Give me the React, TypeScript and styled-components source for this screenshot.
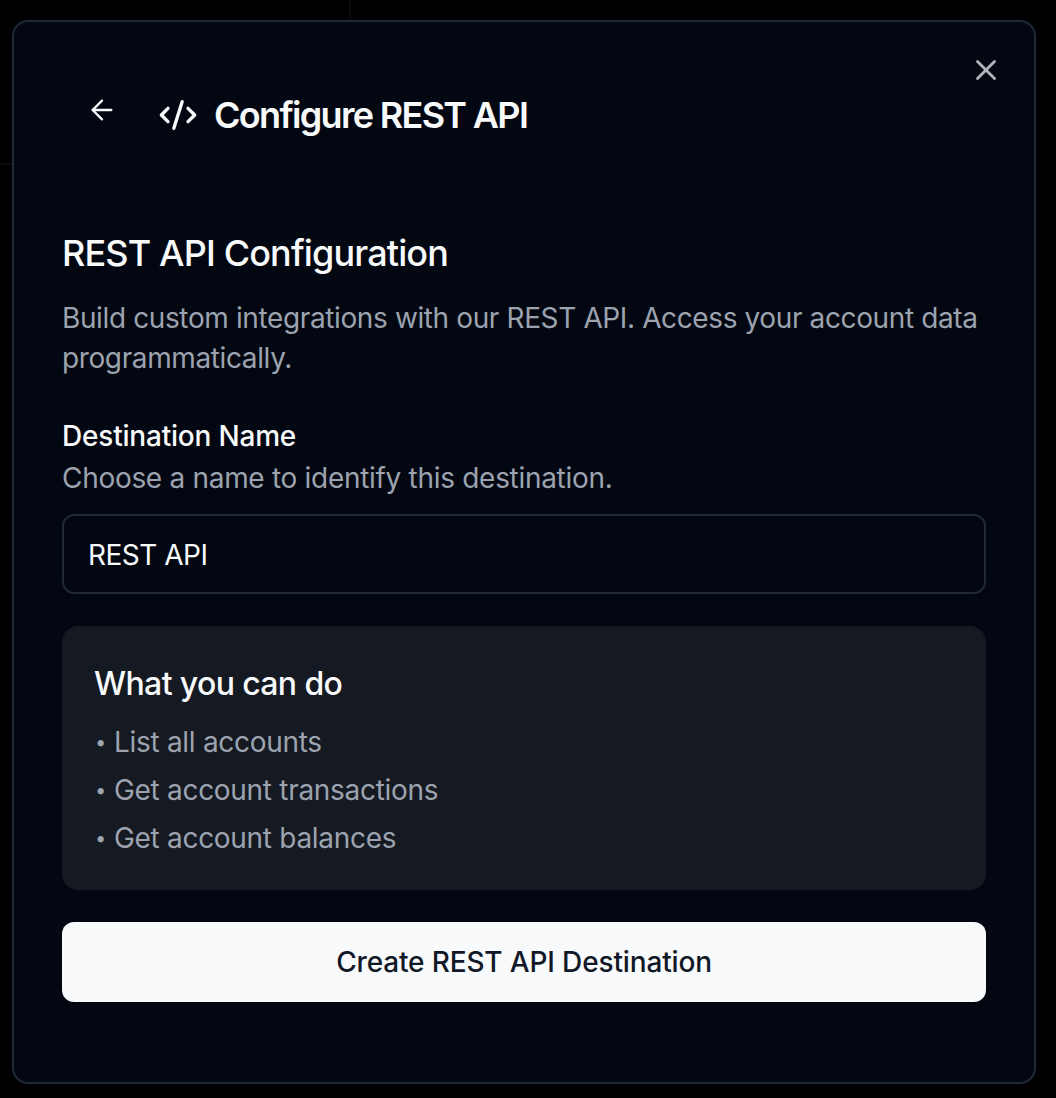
import React from 'react';
import styled, { createGlobalStyle } from 'styled-components';
import { ArrowLeft, CodeXml, X } from 'lucide-react';

const GlobalStyle = createGlobalStyle`
  html, body {
    margin: 0;
    padding: 0;
    background: #000;
  }
  * {
    box-sizing: border-box;
  }
`;

const ACTIONS = ['List all accounts', 'Get account transactions', 'Get account balances'];

export default function App() {
  return (
    <>
      <GlobalStyle />
      <Page>
        <Modal>
          <CloseButton aria-label="Close">
            <X size={34} strokeWidth={2} />
          </CloseButton>
          <Header>
            <BackButton aria-label="Back">
              <ArrowLeft size={32} strokeWidth={1.75} />
            </BackButton>
            <Title>
              <CodeXml size={40} strokeWidth={2} />
              Configure REST API
            </Title>
          </Header>
          <SectionTitle>REST API Configuration</SectionTitle>
          <Description>
            Build custom integrations with our REST API. Access your account data programmatically.
          </Description>
          <Label>Destination Name</Label>
          <Hint>Choose a name to identify this destination.</Hint>
          <NameInput defaultValue="REST API" />
          <InfoCard>
            <InfoTitle>What you can do</InfoTitle>
            <ActionList>
              {ACTIONS.map((action) => (
                <ActionItem key={action}>
                  <Bullet>•</Bullet>
                  {action}
                </ActionItem>
              ))}
            </ActionList>
          </InfoCard>
          <SubmitButton>Create REST API Destination</SubmitButton>
        </Modal>
      </Page>
    </>
  );
}

const Page = styled.div`
  width: 1056px;
  height: 1098px;
  padding: 20px 20px 14px 12px;
  overflow: hidden;
  font-family: Inter, 'Liberation Sans', sans-serif;
  background-color: #000;
  background-image: linear-gradient(#0a0a0c, #0a0a0c), linear-gradient(#0a0a0c, #0a0a0c);
  background-size: 2px 20px, 12px 2px;
  background-position: 349px 0, 0 163px;
  background-repeat: no-repeat;
`;

const Modal = styled.div`
  position: relative;
  height: 100%;
  padding: 48px 48px 0;
  background: #030712;
  border: 2px solid #1f2937;
  border-radius: 16px;
`;

const CloseButton = styled.button`
  position: absolute;
  top: 31px;
  right: 31px;
  display: flex;
  padding: 0;
  color: #b1b4ba;
  background: none;
  border: none;
`;

const Header = styled.div`
  display: flex;
  align-items: flex-start;
  height: 80px;
  padding-left: 24px;
`;

const BackButton = styled.button`
  display: flex;
  margin-top: 24px;
  padding: 0;
  color: #f9fafb;
  background: none;
  border: none;
`;

const Title = styled.h2`
  display: flex;
  align-items: center;
  gap: 16px;
  margin: 15px 0 0 40px;
  height: 60px;
  color: #f9fafb;
  font-size: 36px;
  font-weight: 600;
  letter-spacing: -1.68px;
  line-height: 60px;
`;

const SectionTitle = styled.h3`
  margin: 75px 0 0;
  color: #f9fafb;
  font-size: 36px;
  font-weight: 500;
  letter-spacing: -0.86px;
  line-height: 56px;
`;

const Description = styled.p`
  margin: 17px 0 0;
  color: #9ca3af;
  font-size: 28px;
  letter-spacing: -0.38px;
  line-height: 40px;
`;

const Label = styled.div`
  margin-top: 38px;
  color: #f9fafb;
  font-size: 28px;
  font-weight: 500;
  letter-spacing: -0.2px;
  line-height: 40px;
`;

const Hint = styled.div`
  margin-top: 2px;
  color: #9ca3af;
  font-size: 28px;
  letter-spacing: -0.3px;
  line-height: 40px;
`;

const NameInput = styled.input`
  display: block;
  width: 100%;
  height: 80px;
  margin-top: 16px;
  padding: 2px 24px 0;
  color: #f9fafb;
  font-family: inherit;
  font-size: 28px;
  letter-spacing: -0.5px;
  background: transparent;
  border: 2px solid #1f2937;
  border-radius: 12px;
  outline: none;
`;

const InfoCard = styled.div`
  height: 264px;
  margin-top: 32px;
  padding: 34px 32px 0;
  background: #151922;
  border-radius: 16px;
`;

const InfoTitle = styled.div`
  color: #f9fafb;
  font-size: 32px;
  font-weight: 500;
  letter-spacing: -0.63px;
  line-height: 48px;
`;

const ActionList = styled.ul`
  margin: 10px 0 0;
  padding: 0;
  list-style: none;
`;

const ActionItem = styled.li`
  display: flex;
  color: #9ca3af;
  font-size: 28px;
  letter-spacing: -0.3px;
  line-height: 48px;
`;

const Bullet = styled.span`
  width: 20px;
  padding-left: 1px;
  font-size: 20px;
  flex-shrink: 0;
`;

const SubmitButton = styled.button`
  display: block;
  width: 100%;
  height: 80px;
  margin-top: 32px;
  color: #111827;
  font-family: inherit;
  font-size: 28px;
  font-weight: 500;
  letter-spacing: -0.15px;
  background: #f9fafb;
  border: none;
  border-radius: 12px;
`;
